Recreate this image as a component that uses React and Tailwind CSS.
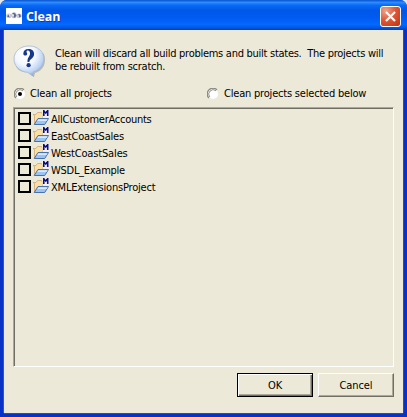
const FONT = "font-['DejaVu_Sans_Condensed','DejaVu_Sans',sans-serif] [font-stretch:condensed]";

const projects = [
  { name: "AllCustomerAccounts", spacing: "tracking-[-0.26px]" },
  { name: "EastCoastSales", spacing: "tracking-[-0.2px]" },
  { name: "WestCoastSales", spacing: "tracking-[-0.15px]" },
  { name: "WSDL_Example", spacing: "tracking-[-0.27px]" },
  { name: "XMLExtensionsProject", spacing: "tracking-[-0.2px]" },
];

function AppIcon() {
  return (
    <svg width="16" height="16" viewBox="0 0 16 16" className="shrink-0">
      <path d="M0 0h16v16H0z" fill="#fff" />
      <ellipse cx="3" cy="7.8" rx="2.8" ry="2.3" fill="#c9cdd8" />
      <ellipse cx="8" cy="7.3" rx="2.6" ry="3" fill="#b4bacb" />
      <ellipse cx="13" cy="7.8" rx="2.8" ry="2.3" fill="#c9cdd8" />
      <path d="M1 8.5l1.5-2 1 3zM6.5 5h2l2 2.5-2 2.5zM12 6.5l2-.5 1 2.5-2 1z" fill="#5a6590" />
      <path d="M6.3 6.3h1.5v2H6.3zM3 6.5h1v1H3zM12 7.5h1v1h-1z" fill="#f5f6fa" />
    </svg>
  );
}

function QuestionIcon() {
  return (
    <svg width="34" height="34" viewBox="0 0 34 34" className="shrink-0">
      <defs>
        <radialGradient id="bubble" cx="38%" cy="28%" r="75%">
          <stop offset="0" stopColor="#fff" />
          <stop offset=".45" stopColor="#f3f8ff" />
          <stop offset=".8" stopColor="#bcd3f3" />
          <stop offset="1" stopColor="#7a9acb" />
        </radialGradient>
      </defs>
      <path d="M31 9c3 9-1 17-9 19l-1 4-6-5C8 28 3 24 3 20l23-14z" fill="#77777a" opacity=".4" />
      <path d="M16 1C7.2 1 1 6.6 1 14s6 12.7 13.6 13.4L20.5 31.5v-4.7C27.3 25.2 31 20.5 31 14 31 6.6 24.8 1 16 1z" fill="url(#bubble)" stroke="#a7b8d0" strokeWidth=".8" />
      <path d="M10.3 8.7c0-3 2-4.7 5-4.7 3.6 0 5.8 1.9 5.8 5 0 2.5-1.5 3.9-3.2 5.2-1.1.9-1.5 1.5-1.5 2.8h-1.9c-.2-2.4.4-3.8 1.4-5.3.7-1.1 1.1-1.8 1.1-3.1 0-1.9-.8-3-2-3-1 0-1.5.5-1.5 1.1 0 .7.7 1 .7 2 0 1-.8 1.8-1.8 1.8-1.3 0-2.1-.8-2.1-1.8z" fill="#17378f" />
      <circle cx="15.6" cy="20.2" r="2.1" fill="#17378f" />
    </svg>
  );
}

function FolderIcon() {
  return (
    <svg width="17" height="17" viewBox="0 0 17 17" className="shrink-0">
      <path d="M2.5 14V5.5l-1.5-1h3l1.5-2h4l1 2v5H6.5z" fill="#fbe0a4" stroke="#cfa672" strokeWidth=".8" />
      <path d="M2.2 14.5l3.8-6h10.5l-3.8 6z" fill="#9cc4f3" stroke="#4a70ae" />
      <path d="M6.5 9.2h9l-1 1.8H5.3z" fill="#d7e9fd" />
      <path d="M10.5 0H17v7.5h-6.5z" fill="#f4f2ea" />
      <path d="M11 6V0h1.6v1h.8v1h.6V1h.8V0h1.7v6h-1.6V3h-.6v1h-1.1V3h-.6v3z" fill="#0c0c86" />
    </svg>
  );
}

function Radio({ checked }) {
  return (
    <svg width="12" height="12" viewBox="0 0 12 12" className="shrink-0">
      <circle cx="6" cy="6" r="5" fill="#fff" />
      <path d="M1.9 10A5.4 5.4 0 0 1 10 1.9" fill="none" stroke="#8b887e" strokeWidth="1.2" />
      <path d="M2.8 9A4.4 4.4 0 0 1 9 2.8" fill="none" stroke="#65635c" strokeWidth=".7" />
      {checked && <circle cx="6" cy="6" r="2" fill="#000" />}
    </svg>
  );
}

function ProjectRow({ name, spacing }) {
  return (
    <label className="flex h-[17px] items-center">
      <span className="size-[13px] shrink-0 border-2 border-black" />
      <span className="ml-px flex"><FolderIcon /></span>
      <span className={`ml-[2px] pt-[2px] whitespace-nowrap ${spacing}`}>{name}</span>
    </label>
  );
}

export default function App() {
  return (
    <div className="bg-[#e4e6e8]">
      <div className={`flex h-[417px] w-[407px] flex-col overflow-hidden rounded-t-[7px] bg-[#0831c5] text-[11px] leading-[13px] text-black ${FONT}`}>
        <header className="flex h-[30px] shrink-0 items-center bg-[linear-gradient(180deg,#0753cd_0%,#2e8bff_8%,#0869f5_18%,#0057e7_35%,#005cf4_62%,#0369ff_82%,#0058e5_92%,#0041bd_100%)] pl-[6px] pr-[6px] pt-[2px]">
          <AppIcon />
          <h1 className="ml-1 grow pt-[2px] font-['Open_Sans',sans-serif] text-[12.5px] font-bold leading-4 tracking-[-0.1px] text-white [font-stretch:normal] [text-shadow:1px_1px_#103b9c]">Clean</h1>
          <button aria-label="Close" className="flex size-[21px] items-center justify-center rounded-[3px] border border-white bg-[radial-gradient(circle_at_25%_20%,#eda48e,#df5939_45%,#bf320d)]">
            <svg width="13" height="13" viewBox="0 0 13 13"><path d="M2 2l9 9M11 2l-9 9" stroke="#fff" strokeWidth="2.2" /></svg>
          </button>
        </header>
        <main className="mx-[4px] mb-[4px] flex min-h-0 grow flex-col bg-[#ece9d8] pl-[9px] pr-[8px] shadow-[-1px_0_#1c5adb,1px_0_#1c4dcb,0_1px_#1c4dcb]">
          <section className="flex h-[56px] pt-[15px]">
            <QuestionIcon />
            <div className="ml-[8px] pt-[2px]">
              <p className="whitespace-pre tracking-[-0.27px]">Clean will discard all build problems and built states.  The projects will</p>
              <p className="whitespace-nowrap tracking-[-0.25px]">be rebuilt from scratch.</p>
            </div>
          </section>
          <section className="flex h-[21px] items-start pl-[1px]">
            <label className="flex w-[193px] items-center gap-1 pt-[1px]"><Radio checked /><span className="whitespace-nowrap tracking-[-0.2px]">Clean all projects</span></label>
            <label className="flex items-center gap-1 pt-[1px]"><Radio /><span className="whitespace-nowrap pl-px tracking-[-0.2px]">Clean projects selected below</span></label>
          </section>
          <section className="h-[260px] w-[381px] border border-b-white border-l-[#aaa79a] border-r-white border-t-[#aaa79a] pl-[4px] pt-[2px] shadow-[inset_1px_1px_#716f64]">
            {projects.map((p) => <ProjectRow key={p.name} {...p} />)}
          </section>
          <footer className="mt-[6px] flex justify-end gap-[5px] pr-[1px]">
            <button className="h-[24px] w-[76px] border border-black tracking-[-0.2px] shadow-[inset_1px_1px_#fff,inset_-1px_-1px_#716f64,inset_-2px_-2px_#aca899]">OK</button>
            <button className="h-[24px] w-[76px] border border-b-[#716f64] border-l-white border-r-[#716f64] border-t-white tracking-[-0.1px] shadow-[inset_-1px_-1px_#aca899]">Cancel</button>
          </footer>
        </main>
      </div>
    </div>
  );
}
